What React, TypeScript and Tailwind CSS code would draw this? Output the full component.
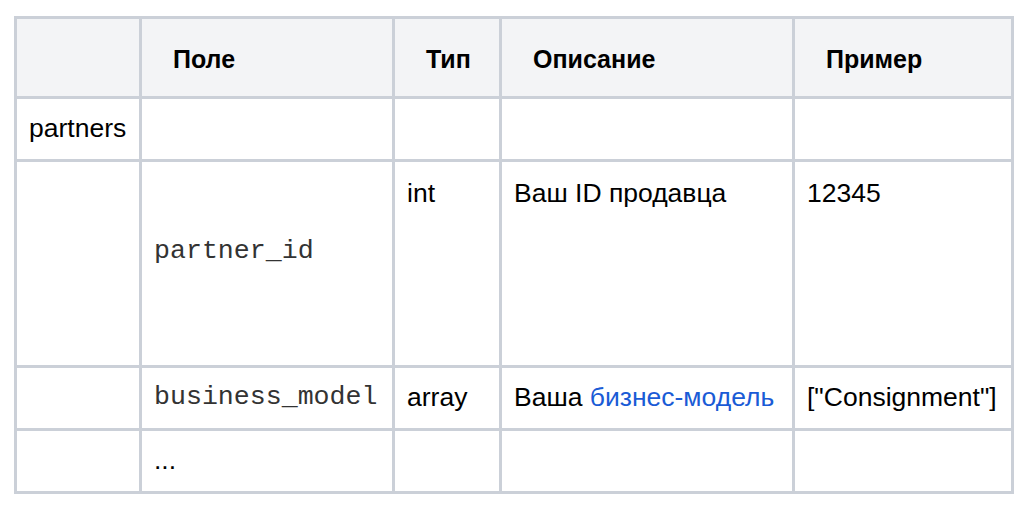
import React from "react";

const sans = "font-['Liberation_Sans',Arial,sans-serif]";
const mono = "font-['Liberation_Mono','Courier_New',monospace]";

function Head({ children }: { children?: React.ReactNode }) {
  return (
    <div className={`bg-[#f3f4f6] flex items-center pl-[31px] pt-[4px] text-[25px] font-bold text-black ${sans}`}>
      {children}
    </div>
  );
}

function Cell({
  children,
  top = false,
  className = "",
}: {
  children?: React.ReactNode;
  top?: boolean;
  className?: string;
}) {
  return (
    <div
      className={`bg-white flex pl-[12px] text-[26.5px] text-black ${sans} ${
        top ? "items-start pt-[12px]" : "items-center"
      } ${className}`}
    >
      {children}
    </div>
  );
}

export default function App() {
  return (
    <div className="bg-white w-[1024px] h-[505px] pt-[16px] pl-[14px]">
      <div className="w-fit grid grid-cols-[122px_250px_104px_290px_216px] grid-rows-[77px_60px_203px_60px_60px] gap-[3px] p-[3px] bg-[#cbd0d8]">
        <Head />
        <Head>Поле</Head>
        <Head>Тип</Head>
        <Head>Описание</Head>
        <Head>Пример</Head>

        <Cell>partners</Cell>
        <Cell />
        <Cell />
        <Cell />
        <Cell />

        <Cell />
        <Cell className="pb-[24px]">
          <span className={`${mono} text-[26.6px] text-[#333]`}>partner_id</span>
        </Cell>
        <Cell top>int</Cell>
        <Cell top>Ваш ID продавца</Cell>
        <Cell top>12345</Cell>

        <Cell />
        <Cell>
          <span className={`${mono} text-[26.6px] text-[#333]`}>business_model</span>
        </Cell>
        <Cell>array</Cell>
        <Cell>
          <span>
            Ваша <span className="text-[#1a5bd6]">бизнес-модель</span>
          </span>
        </Cell>
        <Cell>["Consignment"]</Cell>

        <Cell />
        <Cell>...</Cell>
        <Cell />
        <Cell />
        <Cell />
      </div>
    </div>
  );
}
